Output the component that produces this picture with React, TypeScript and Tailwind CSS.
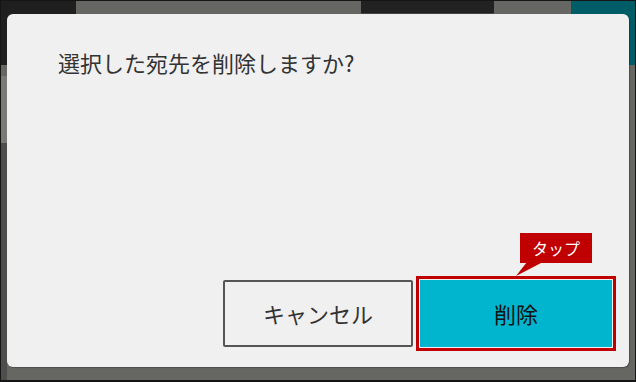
const FONT = { fontFamily: '"Noto Sans CJK JP", "Noto Sans", sans-serif' };

function Backdrop() {
  // the screen behind the modal: a toolbar strip across the top
  return (
    <div className="flex h-full w-full items-start">
      <div className="flex w-[75px] flex-col">
        <div className="h-[64px] bg-[#1f1f1f]" />
        <div className="h-[11px] w-[6px] bg-[#666663]" />
        <div className="h-[67px] w-[6px] bg-[#7a7a77]" />
        <div className="h-[240px] w-[6px] bg-[#4e4e4c]" />
      </div>
      <div className="h-[13px] w-[285px] bg-[#666663]" />
      <div className="h-[13px] w-[133px] border-b border-[#444] bg-[#222222]" />
      <div className="h-[13px] w-[77px] bg-[#666663]" />
      <div className="h-[64px] flex-1 bg-[#005c66]" />
    </div>
  );
}

function TapCallout() {
  return (
    <div className="absolute bottom-[84px] left-[100px]">
      <div className="flex h-[30px] w-[72px] items-center justify-center bg-[#c00000] text-[16px] leading-none text-white">
        タップ
      </div>
      <svg className="absolute left-[-4px] top-[29px]" width="30" height="16" viewBox="0 0 30 16">
        <polygon points="11,0 27,0 0,14" fill="#c00000" />
      </svg>
    </div>
  );
}

export default function App() {
  return (
    <div className="relative h-[382px] w-[636px] overflow-hidden border border-b-2 border-[#151515] bg-[#666663]" style={FONT}>
      <Backdrop />

      <div className="absolute left-[6px] top-[13px] flex h-[353px] w-[622px] flex-col rounded-[6px] bg-[#f0f0f0] shadow-[1px_1px_1px_rgba(0,0,0,0.25)]">
        <p className="pl-[51px] pt-[33px] text-[22px] leading-[30px] text-[#333333]">
          選択した宛先を削除しますか?
        </p>

        <div className="mt-auto flex justify-end gap-[7px] pb-[20px] pr-[17px]">
          <button className="flex h-[67px] w-[190px] items-center justify-center rounded-[2px] border-2 border-[#555555] bg-[#f0f0f0] text-[22px] text-[#333333]">
            キャンセル
          </button>
          <div className="relative">
            <button className="flex h-[67px] w-[192px] items-center justify-center bg-[#00b5cd] text-[22px] text-[#111111] outline-[3px] outline-offset-1 outline-[#c00000] outline-solid">
              削除
            </button>
            <TapCallout />
          </div>
        </div>
      </div>
    </div>
  );
}
